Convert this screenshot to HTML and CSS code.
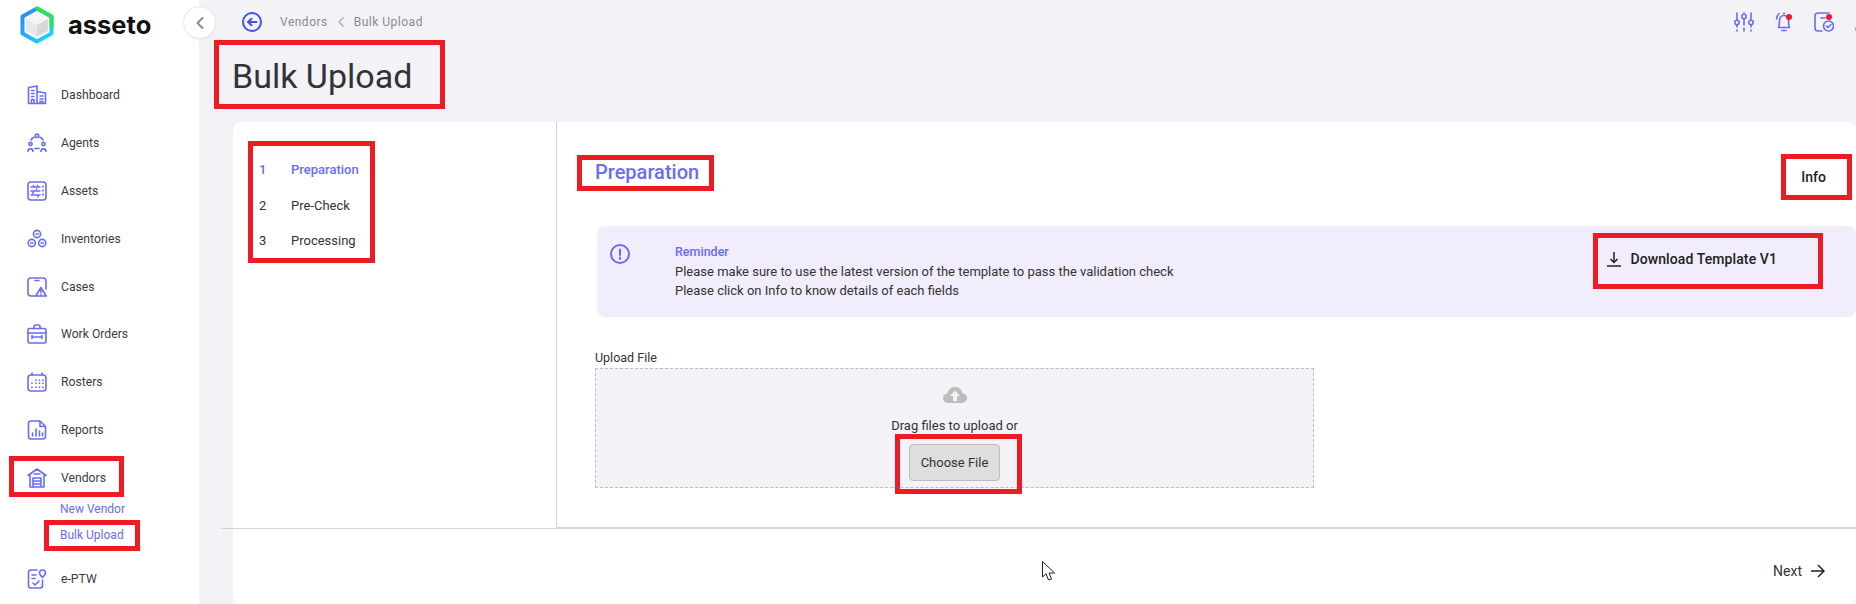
FILE: index.html
```html
<!DOCTYPE html>
<html lang="en">
<head>
<meta charset="utf-8">
<title>Bulk Upload</title>
<link rel="stylesheet" href="styles.css">
</head>
<body>
<div class="page">
  <aside class="sidebar">
    <div class="brand">
      <svg class="brand-mark" viewBox="0 0 34 38" width="34" height="38">
        <defs>
          <linearGradient id="lgA" x1="0" y1="0" x2="1" y2="1">
            <stop offset="0" stop-color="#2f80ff"/><stop offset="1" stop-color="#16e0f0"/>
          </linearGradient>
        </defs>
        <path d="M17 2.500 31.500 10.500V27.500L17 35.500 2.500 27.500V10.500Z" fill="none" stroke="url(#lgA)" stroke-width="4" stroke-linejoin="round"/>
        <path d="M17 2.500 31.500 10.500V20" fill="none" stroke="#2fe05a" stroke-width="4" stroke-linejoin="round" stroke-linecap="round"/>
        <path d="M17 7 28 13 17 19 6 13Z" fill="#f6f6f6"/>
        <path d="M6 13 17 19V31L6 25Z" fill="#e8e8e8"/>
        <path d="M28 13 17 19V31L28 25Z" fill="#d8d8d8"/>
      </svg>
      <span class="brand-name">asseto</span>
    </div>
    <nav class="nav">
      <a class="nav-item"><svg class="nav-icon" viewBox="0 0 20 20"><path d="M1.500 18.500V2.500L10 1V18.500M10 6.500 18.500 8V18.500H1.500M4.500 5.500H7M4.500 8.500H7M4.500 11.500H7M13 11H16M13 14H16M4.500 18V14.500H7V18M13 18V16.500H16V18"/></svg><span>Dashboard</span></a>
      <a class="nav-item"><svg class="nav-icon" viewBox="0 0 20 20"><circle cx="10" cy="2.800" r="1.700"/><circle cx="3.500" cy="11" r="1.600"/><circle cx="16.500" cy="11" r="1.600"/><path d="M1 18.500C1 15 6 15 6 18.500M14 18.500C14 15 19 15 19 18.500M8 15.500H12M4 7C4.800 5.500 5.800 4.800 7 4.200M13 4.200C14.200 4.800 15.200 5.500 16 7"/></svg><span>Agents</span></a>
      <a class="nav-item"><svg class="nav-icon" viewBox="0 0 20 20"><rect x="1" y="1" width="18" height="18" rx="3"/><path d="M4 6H13M4 10H13M4 14H13M6.500 4.500V5M10.500 4.500V5M6 11.500V12.500M9.500 8V8.500M11 15.500V16M16 5V6M16 9V10M16 13V14"/></svg><span>Assets</span></a>
      <a class="nav-item"><svg class="nav-icon" viewBox="0 0 20 20"><circle cx="10" cy="5" r="3.600"/><circle cx="4.800" cy="14" r="3.600"/><circle cx="15.200" cy="14" r="3.600"/><path d="M8.800 5H11.200M3.600 14H6M14 14H16.400"/></svg><span>Inventories</span></a>
      <a class="nav-item"><svg class="nav-icon" viewBox="0 0 20 20"><path d="M9 19H4C2 19 1 18 1 16V4C1 2 2 1 4 1H16C18 1 19 2 19 4V12M8 3.500H12M14 10.500 19.200 19H8.800ZM14 13.500V15.500M14 17.200V17.500"/></svg><span>Cases</span></a>
      <a class="nav-item"><svg class="nav-icon" viewBox="0 0 20 20"><rect x="1" y="4.500" width="18" height="14.500" rx="1.500"/><path d="M7 4.500V2.500C7 1.500 8 1 9 1H11C12 1 13 1.500 13 2.500V4.500M1 9H19M6 13H14M5 11.500V14.500M15 11.500V14.500"/></svg><span>Work Orders</span></a>
      <a class="nav-item"><svg class="nav-icon" viewBox="0 0 20 20"><rect x="1" y="3" width="18" height="16" rx="3"/><path d="M5 1V3M15 1V3M5 11V11.500M5 15V15.500M9 8V8.500M9 11V11.500M9 15V15.500M12.500 8V8.500M12.500 11V11.500M12.500 15V15.500M16 8V8.500M16 11V11.500M16 15V15.500"/></svg><span>Rosters</span></a>
      <a class="nav-item"><svg class="nav-icon" viewBox="0 0 20 20"><path d="M13 1H4C2.500 1 1.500 2 1.500 3.500V16.500C1.500 18 2.500 19 4 19H16C17.500 19 18.500 18 18.500 16.500V6.500L13 1V6.500H18.500M5.500 16V13M9 16V9M12.500 16V11M15.500 16V13"/></svg><span>Reports</span></a>
      <a class="nav-item"><svg class="nav-icon" viewBox="0 0 20 20"><path d="M1 7.500 10 1 19 7.500M3 6V19H17V6M6 19V10H14V19M6 13H14M6 16H14M7 6H13"/></svg><span>Vendors</span></a>
      <div class="subnav">
        <a class="subnav-item">New Vendor</a>
        <a class="subnav-item">Bulk Upload</a>
      </div>
      <a class="nav-item"><svg class="nav-icon" viewBox="0 0 20 20"><path d="M10 1H4C2.500 1 1.500 2 1.500 3.500V16.500C1.500 18 2.500 19 4 19H13C14.500 19 15.500 18 15.500 16.500V11M5 6H9M5 9.500H8M6 14 8 16 12 12"/><path d="M15.500 8.500C13.500 6.500 12.500 5.500 12.500 4A3 3 0 0 1 18.500 4C18.500 5.500 17.500 6.500 15.500 8.500Z"/></svg><span>e-PTW</span></a>
    </nav>
  </aside>

  <main class="main">
    <button class="collapse" type="button" aria-label="Collapse">
      <svg viewBox="0 0 10 14" width="10" height="14"><path d="M7.500 2 2.500 7 7.500 12"/></svg>
    </button>
    <header class="topbar">
      <svg class="back-icon" viewBox="0 0 20 20" width="20" height="20"><circle cx="10" cy="10" r="9"/><path d="M14.500 10H6.500M9.500 6.800 6 10 9.500 13.200"/></svg>
      <div class="crumbs">
        <span>Vendors</span>
        <svg class="crumb-sep" viewBox="0 0 8 12" width="8" height="12"><path d="M6.500 1.500 2 6 6.500 10.500"/></svg>
        <span>Bulk Upload</span>
      </div>
      <div class="actions">
        <span class="action"><svg class="nav-icon" viewBox="0 0 20 20"><path d="M3 1V8M3 13V15M3 18V19M10 1V2M10 7V13M10 16V19M17 1V8M17 13V15M17 18V19"/><circle cx="3" cy="10.500" r="2.200"/><circle cx="10" cy="4.500" r="2.200"/><circle cx="17" cy="10.500" r="2.200"/></svg></span>
        <span class="action"><svg class="nav-icon" viewBox="0 0 20 20"><path d="M4.500 15.500C5.500 13.500 5.500 11 5.500 8.500C5.500 5.500 7.500 3.500 10 3.500C12.500 3.500 14.500 5.500 14.500 8.500C14.500 11 14.500 13.500 15.500 15.500ZM8 18.500H12M2.500 7C2.800 5 3.500 3 5 1.500M10 1V2"/></svg><i class="dot"></i></span>
        <span class="action"><svg class="nav-icon" viewBox="0 0 20 20"><path d="M8 19H4C2 19 1 18 1 16V4C1 2 2 1 4 1H15M7 6H11"/><circle cx="14.500" cy="14" r="5"/><path d="M12.500 14 14 15.500 17 12.500"/></svg><i class="dot"></i></span>
        <span class="action"><svg class="nav-icon" viewBox="0 0 20 20"><path d="M2 18C2 15 4 14 6 14"/></svg></span>
      </div>
    </header>

    <h1 class="title">Bulk Upload</h1>

    <section class="card">
      <div class="card-body">
        <ol class="steps">
          <li class="step step-active"><span class="step-num">1</span><span>Preparation</span></li>
          <li class="step"><span class="step-num">2</span><span>Pre-Check</span></li>
          <li class="step"><span class="step-num">3</span><span>Processing</span></li>
        </ol>
        <div class="panel">
          <div class="panel-head">
            <h2 class="panel-title">Preparation</h2>
            <span class="info">Info</span>
          </div>
          <div class="reminder">
            <svg class="reminder-icon" viewBox="0 0 20 20" width="20" height="20"><circle cx="10" cy="10" r="9"/><path d="M10 5.500V11M10 13.500V15"/></svg>
            <div class="reminder-text">
              <div class="reminder-title">Reminder</div>
              <div>Please make sure to use the latest version of the template to pass the validation check</div>
              <div>Please click on Info to know details of each fields</div>
            </div>
            <a class="download">
              <svg viewBox="0 0 14 15" width="14" height="15"><path d="M7 0V10M3.500 7 7 10.500 10.500 7M0 14H14"/></svg>
              <span>Download Template V1</span>
            </a>
          </div>
          <div class="upload-label">Upload File</div>
          <div class="dropzone">
            <svg class="cloud" viewBox="0 0 24 16" width="24" height="16"><path d="M6 16C2.500 16 0 13.800 0 11C0 8.500 1.800 6.700 4.500 6.300C5.200 2.600 8.300 0 12 0C15.700 0 18.800 2.600 19.500 6.300C22.200 6.700 24 8.500 24 11C24 13.800 21.500 16 18 16Z"/><path class="cloud-arrow" d="M12 3.500 17 9H14V14H10V9H7Z"/></svg>
            <div class="drag-text">Drag files to upload or</div>
            <button class="choose" type="button">Choose File</button>
          </div>
        </div>
      </div>
      <div class="rules"><div class="rule-left"></div><div class="rule-right"></div></div>
      <footer class="card-foot">
        <a class="next"><span>Next</span><svg viewBox="0 0 14 14" width="14" height="14"><path d="M0 7H13M7 1 13 7 7 13"/></svg></a>
      </footer>
    </section>
  </main>

  <div class="mark mark-title"></div>
  <div class="mark mark-steps"></div>
  <div class="mark mark-heading"></div>
  <div class="mark mark-info"></div>
  <div class="mark mark-download"></div>
  <div class="mark mark-choose"></div>
  <div class="mark mark-vendors"></div>
  <div class="mark mark-bulk"></div>
  <svg class="cursor" viewBox="0 0 13 20" width="13" height="20"><path d="M.5.5V16L4 12.800 6.500 19 9.500 18 7 12H12.500Z"/></svg>
</div>
</body>
</html>
```

FILE: styles.css
```css
* { box-sizing: border-box; }

html, body {
  margin: 0;
  height: 100%;
  overflow: hidden;
}

body {
  font-family: Roboto, "Liberation Sans", sans-serif;
  font-size: 13px;
  color: #333;
  background: #f2f2f7;
}

.page {
  position: relative;
  display: flex;
  width: 1856px;
  height: 604px;
  overflow: hidden;
}

/* Sidebar */
.sidebar {
  flex: 0 0 199px;
  background: #fff;
}

.brand {
  display: flex;
  align-items: center;
  gap: 14px;
  height: 71px;
  padding: 0 0 22px 20px;
}

.brand-name {
  font-family: Inter, Roboto, sans-serif;
  font-size: 25.5px;
  font-weight: 700;
  color: #111;
}

.nav-item {
  display: flex;
  align-items: center;
  gap: 14px;
  height: 47.9px;
  padding-left: 27px;
  font-size: 12.2px;
  color: #3b3b45;
}

.nav-icon {
  flex: none;
  width: 20px;
  height: 20px;
  fill: none;
  stroke: #6a6cf6;
  stroke-width: 1.600;
  stroke-linecap: round;
  stroke-linejoin: round;
}

.subnav {
  margin-top: -6px;
  padding: 0 0 7px 60px;
}

.subnav-item {
  display: flex;
  align-items: center;
  height: 26px;
  font-size: 12px;
  color: #6a6cf6;
}

/* Main column */
.main {
  position: relative;
  flex: 1;
  min-width: 0;
  padding-left: 34px;
}

.collapse {
  position: absolute;
  left: -16px;
  top: 6px;
  display: flex;
  align-items: center;
  justify-content: center;
  width: 33px;
  height: 33px;
  padding: 0;
  border: 1px solid #e8e8ec;
  border-radius: 50%;
  background: #fff;
  box-shadow: 0 1px 2px rgba(0, 0, 0, .06);
}

.collapse svg {
  fill: none;
  stroke: #8a8a8a;
  stroke-width: 2;
  stroke-linecap: round;
  stroke-linejoin: round;
}

.topbar {
  display: flex;
  align-items: center;
  height: 44px;
  padding-left: 9px;
}

.back-icon {
  flex: none;
  fill: none;
  stroke: #3f56e6;
  stroke-width: 2;
  stroke-linecap: round;
  stroke-linejoin: round;
}

.crumbs {
  display: flex;
  align-items: center;
  gap: 9px;
  margin-left: 18px;
  font-size: 12px;
  letter-spacing: .5px;
  color: #8b8b90;
}

.crumb-sep {
  fill: none;
  stroke: #b4b4b8;
  stroke-width: 1.500;
}

.actions {
  display: flex;
  gap: 20px;
  margin-left: auto;
  margin-right: -18px;
}

.action {
  position: relative;
  display: block;
  width: 20px;
  height: 20px;
}

.dot {
  position: absolute;
  right: 2px;
  top: 2px;
  width: 6px;
  height: 6px;
  border-radius: 50%;
  background: #f5152d;
}

.title {
  margin: 12px 0 26px -1px;
  font-size: 34px;
  line-height: 40px;
  font-weight: 400;
  color: #333;
}

/* Card */
.card {
  display: flex;
  flex-direction: column;
  height: 482px;
  background: #fff;
  border-radius: 8px;
}

.card-body {
  display: flex;
  height: 405px;
}

.steps {
  flex: 0 0 324px;
  margin: 0;
  padding: 30px 0 0 26px;
  list-style: none;
  border-right: 1px solid #d2d2d2;
}

.step {
  display: flex;
  align-items: center;
  height: 35.5px;
  font-size: 13px;
  color: #333;
}

.step-active {
  font-weight: 500;
  color: #6a6cf6;
}

.step-num {
  flex: 0 0 32px;
}

.panel {
  flex: 1;
  min-width: 0;
  padding-left: 38px;
}

.panel-head {
  display: flex;
  align-items: flex-start;
  justify-content: space-between;
  height: 104px;
  padding: 38px 30px 0 0;
}

.panel-title {
  margin: 0;
  font-size: 20px;
  line-height: 24px;
  font-weight: 500;
  color: #6a6cf6;
}

.info {
  margin-top: 7px;
  font-size: 14px;
  line-height: 20px;
  font-weight: 500;
  color: #222;
}

.reminder {
  display: flex;
  align-items: flex-start;
  height: 91px;
  margin-left: 2px;
  padding: 16px 79px 0 13px;
  border-radius: 8px;
  background: #f1edfc;
}

.reminder-icon {
  flex: none;
  margin-top: 2px;
  fill: none;
  stroke: #6a6cf6;
  stroke-width: 2;
  stroke-linecap: round;
}

.reminder-text {
  margin-left: 45px;
  font-size: 13px;
  line-height: 19.5px;
  color: #333;
}

.reminder-title {
  font-size: 12.5px;
  font-weight: 500;
  color: #6a6cf6;
}

.download {
  display: flex;
  align-items: center;
  gap: 9px;
  height: 20px;
  margin-top: 7px;
  margin-left: auto;
  font-size: 14px;
  font-weight: 500;
  letter-spacing: .1px;
  color: #222;
}

.download svg {
  fill: none;
  stroke: #222;
  stroke-width: 1.500;
}

.upload-label {
  height: 16px;
  margin-top: 33px;
  font-size: 12.5px;
  line-height: 16px;
  color: #333;
}

.dropzone {
  display: flex;
  flex-direction: column;
  align-items: center;
  width: 719px;
  height: 120px;
  margin-top: 2px;
  padding-top: 18px;
  border: 1px dashed #bdbdbd;
  background: #f2f2f7;
}

.cloud {
  fill: #bdbdbd;
}

.cloud-arrow {
  fill: #f2f2f7;
}

.drag-text {
  margin-top: 15px;
  font-size: 13px;
  line-height: 16px;
  color: #333;
}

.choose {
  width: 91px;
  height: 37px;
  margin-top: 10px;
  padding: 0;
  border: 1px solid #bdbdbd;
  border-radius: 4px;
  background: #dedede;
  font-family: inherit;
  font-size: 13px;
  color: #333;
}

.rules {
  display: flex;
  align-items: center;
  height: 2px;
  margin-left: -12px;
}

.rule-left {
  flex: 0 0 335px;
  height: 1px;
  background: #d2d2d2;
}

.rule-right {
  flex: 1;
  height: 2px;
  background: #d2d2d2;
}

.card-foot {
  display: flex;
  justify-content: flex-end;
  padding: 32px 31px 0 0;
}

.next {
  display: flex;
  align-items: center;
  gap: 9px;
  height: 20px;
  font-size: 14px;
  color: #333;
}

.next svg {
  fill: none;
  stroke: #222;
  stroke-width: 1.500;
}

/* Red annotation boxes drawn over the screenshot */
.mark {
  position: absolute;
  border: 5px solid #ed1c24;
  pointer-events: none;
}

.mark-title { left: 214px; top: 40px; width: 231px; height: 69px; }
.mark-steps { left: 248px; top: 141px; width: 127px; height: 122px; }
.mark-heading { left: 577px; top: 155px; width: 137px; height: 36px; }
.mark-info { left: 1781px; top: 154px; width: 71px; height: 46px; }
.mark-download { left: 1593px; top: 233px; width: 230px; height: 56px; }
.mark-choose { left: 895px; top: 434px; width: 127px; height: 60px; }
.mark-vendors { left: 9px; top: 456px; width: 115px; height: 41px; }
.mark-bulk { left: 44px; top: 520px; width: 96px; height: 31px; }

.cursor {
  position: absolute;
  left: 1042px;
  top: 561px;
  fill: #fff;
  stroke: #222;
  stroke-width: 1;
}
```
